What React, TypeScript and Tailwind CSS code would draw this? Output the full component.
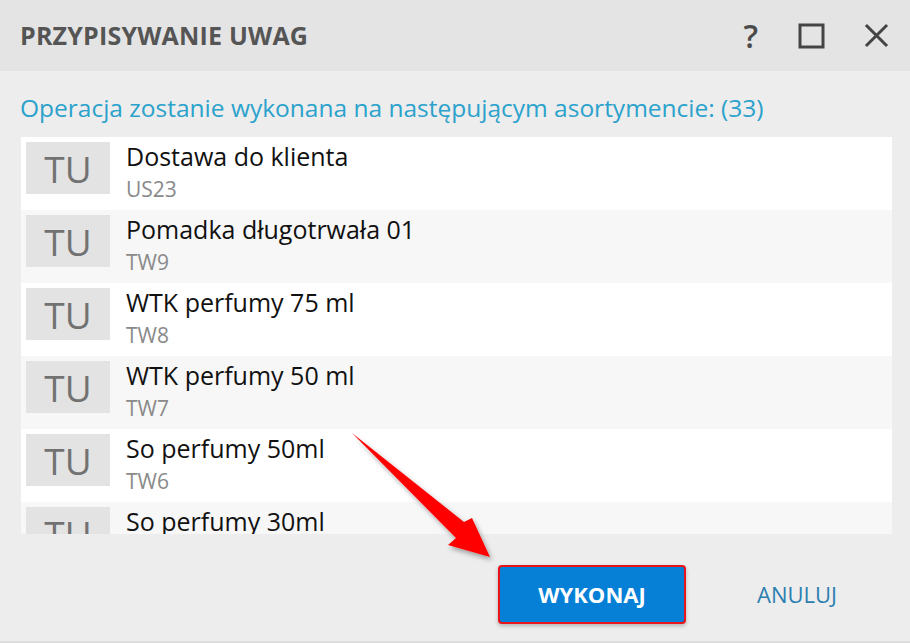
const items = [
  { name: 'Dostawa do klienta', code: 'US23' },
  { name: 'Pomadka długotrwała 01', code: 'TW9' },
  { name: 'WTK perfumy 75 ml', code: 'TW8' },
  { name: 'WTK perfumy 50 ml', code: 'TW7' },
  { name: 'So perfumy 50ml', code: 'TW6' },
  { name: 'So perfumy 30ml', code: 'TW5' },
];

function ItemRow({ name, code, odd }: { name: string; code: string; odd: boolean }) {
  return (
    <div className={`flex h-[73px] shrink-0 items-start gap-4 px-[5px] pt-[5px] ${odd ? 'bg-[#f7f7f7]' : 'bg-white'}`}>
      <div className="flex h-[52px] w-[84px] shrink-0 items-center justify-center bg-[#e3e3e3] text-[37px] leading-none text-[#727272]">
        TU
      </div>
      <div className="flex flex-col">
        <span className="text-[25px] leading-[28px] text-[#111]">{name}</span>
        <span className="mt-[7px] text-[21px] leading-[24px] text-[#8a8a8a]">{code}</span>
      </div>
    </div>
  );
}

export default function App() {
  return (
    <div className="relative flex h-[643px] w-[910px] flex-col bg-[#ededed] font-['Open_Sans','Noto_Sans',sans-serif]">
      <div className="flex h-[71px] shrink-0 items-center justify-between bg-[#e4e4e4] pl-5 pr-5">
        <h1 className="text-[25px] font-bold tracking-[0.2px] text-[#555]">PRZYPISYWANIE UWAG</h1>
        <div className="flex items-center text-[#444]">
          <span className="mr-[40px] text-[32px] font-semibold leading-none text-[#4a4a4a]">?</span>
          <svg className="mr-[38px]" width="28" height="28" viewBox="0 0 28 28" fill="none" stroke="currentColor" strokeWidth="3">
            <rect x="2" y="3" width="23" height="22" />
          </svg>
          <svg width="26" height="26" viewBox="0 0 26 26" fill="none" stroke="currentColor" strokeWidth="3" strokeLinecap="square">
            <path d="M3 3 L22 22 M22 3 L3 22" />
          </svg>
        </div>
      </div>

      <p className="ml-5 mt-[22px] text-[24.5px] leading-[30px] text-[#2ba2cc]">
        Operacja zostanie wykonana na następującym asortymencie: (33)
      </p>

      <div className="ml-[21px] mt-[14px] flex h-[397px] w-[871px] flex-col overflow-hidden">
        {items.map((it, i) => (
          <ItemRow key={it.code} name={it.name} code={it.code} odd={i % 2 === 1} />
        ))}
      </div>

      <div className="flex flex-1 items-start justify-end gap-[17px] border-b-2 border-[#dedede] pr-[19px] pt-[31px]">
        <button className="flex h-[59px] w-[188px] items-center justify-center rounded-[4px] border-2 border-[#e8141c] bg-[#0580d6] text-[22px] font-bold text-white shadow-[0_2px_4px_rgba(0,0,0,0.25)]">
          WYKONAJ
        </button>
        <button className="flex h-[59px] w-[188px] items-center justify-center text-[22px] text-[#2c7fb0]">
          ANULUJ
        </button>
      </div>

      <svg className="pointer-events-none absolute left-0 top-0" width="910" height="643" viewBox="0 0 910 643">
        <defs>
          <filter id="sh" x="-20%" y="-20%" width="140%" height="140%">
            <feDropShadow dx="2" dy="3" stdDeviation="2.5" floodColor="#000" floodOpacity="0.35" />
          </filter>
        </defs>
        <polygon points="352,433 464,522 472,518 490,557 448,545 456,538" fill="#ff0000" filter="url(#sh)" />
      </svg>
    </div>
  );
}
